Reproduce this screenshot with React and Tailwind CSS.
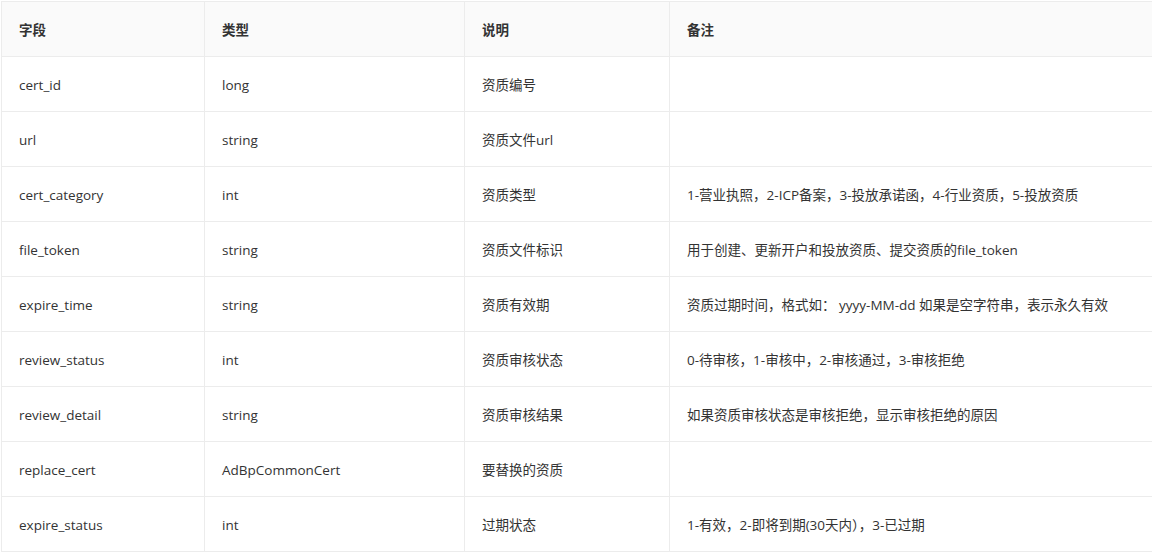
const rows = [
  ["cert_id","long","资质编号",""],
  ["url","string","资质文件url",""],
  ["cert_category","int","资质类型","1-营业执照，2-ICP备案，3-投放承诺函，4-行业资质，5-投放资质"],
  ["file_token","string","资质文件标识","用于创建、更新开户和投放资质、提交资质的file_token"],
  ["expire_time","string","资质有效期","资质过期时间，格式如： yyyy-MM-dd 如果是空字符串，表示永久有效"],
  ["review_status","int","资质审核状态","0-待审核，1-审核中，2-审核通过，3-审核拒绝"],
  ["review_detail","string","资质审核结果","如果资质审核状态是审核拒绝，显示审核拒绝的原因"],
  ["replace_cert","AdBpCommonCert","要替换的资质",""],
  ["expire_status","int","过期状态","1-有效，2-即将到期(30天内），3-已过期"],
];
const cols = "grid grid-cols-[203px_260px_205px_1fr]";
function Cell({ children, head, last }) {
  return (
    <div className={`h-[55px] flex items-center pl-[17px] pt-[2px] whitespace-nowrap border-b border-r border-[#ececec] ${head ? "font-bold" : ""} ${last ? "border-r-0" : ""}`}>
      {children}
    </div>
  );
}
export default function App() {
  return (
    <div className="w-[1152px] h-[556px] bg-white text-[13.5px] text-[#333]" style={{ fontFamily: '"Open Sans","Noto Sans CJK SC",sans-serif' }}>
      <div className="ml-px mt-px border-t border-l border-[#ececec]">
        <div className={`${cols} bg-[#fafafa]`}>
          {["字段","类型","说明","备注"].map((h, i) => <Cell key={i} head last={i === 3}>{h}</Cell>)}
        </div>
        {rows.map((r, i) => (
          <div key={i} className={cols}>
            {r.map((c, j) => <Cell key={j} last={j === 3}>{c}</Cell>)}
          </div>
        ))}
      </div>
    </div>
  );
}
